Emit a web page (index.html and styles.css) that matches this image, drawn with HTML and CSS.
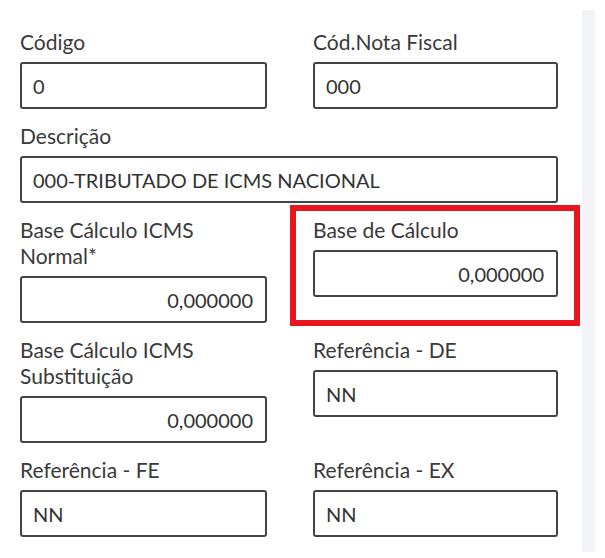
FILE: index.html
```html
<!DOCTYPE html>
<html lang="pt-BR">
<head>
<meta charset="utf-8">
<title>Tributação ICMS</title>
<link rel="stylesheet" href="styles.css">
</head>
<body>
<div class="page">
  <form class="form">
    <div class="field">
      <label class="label">Código</label>
      <div class="input">0</div>
    </div>
    <div class="field">
      <label class="label">Cód.Nota Fiscal</label>
      <div class="input">000</div>
    </div>
    <div class="field wide">
      <label class="label">Descrição</label>
      <div class="input">000-TRIBUTADO DE ICMS NACIONAL</div>
    </div>
    <div class="field">
      <label class="label">Base Cálculo ICMS<br>Normal*</label>
      <div class="input num">0,000000</div>
    </div>
    <div class="field highlight">
      <label class="label">Base de Cálculo</label>
      <div class="input num">0,000000</div>
    </div>
    <div class="field">
      <label class="label">Base Cálculo ICMS<br>Substituição</label>
      <div class="input num">0,000000</div>
    </div>
    <div class="field">
      <label class="label">Referência - DE</label>
      <div class="input">NN</div>
    </div>
    <div class="field">
      <label class="label">Referência - FE</label>
      <div class="input">NN</div>
    </div>
    <div class="field">
      <label class="label">Referência - EX</label>
      <div class="input">NN</div>
    </div>
  </form>
  <div class="track"></div>
</div>
</body>
</html>
```

FILE: styles.css
```css
html, body {
  margin: 0;
  padding: 0;
  background: #ffffff;
}

body {
  font-family: "Lato", "Noto Sans", sans-serif;
  color: #333333;
  overflow: hidden;
}

.page {
  display: flex;
  align-items: flex-start;
  width: 605px;
  height: 558px;
}

.form {
  width: 562px;
  padding: 29px 0 0 20px;
  display: grid;
  grid-template-columns: 247px 245px;
  column-gap: 46px;
  row-gap: 14px;
  align-items: start;
}

.field {
  display: flex;
  flex-direction: column;
}

.field.wide {
  grid-column: 1 / span 2;
}

.label {
  font-size: 21px;
  line-height: 26px;
  color: #3a3a3a;
  margin-bottom: 7px;
}

.input {
  box-sizing: border-box;
  height: 47px;
  border: 2px solid #444444;
  border-radius: 3px;
  padding: 0 12px 0 11px;
  display: flex;
  align-items: center;
  font-size: 20px;
  color: #333333;
  background: #ffffff;
}

.input.num {
  justify-content: flex-end;
}

.highlight {
  position: relative;
}

.highlight::after {
  content: "";
  position: absolute;
  left: -23px;
  right: -22px;
  top: -12px;
  bottom: -29px;
  border: 6px solid #e8161f;
  pointer-events: none;
}

.track {
  width: 13px;
  height: 542px;
  margin-top: 10px;
  background: #f3f4f7;
}
```
